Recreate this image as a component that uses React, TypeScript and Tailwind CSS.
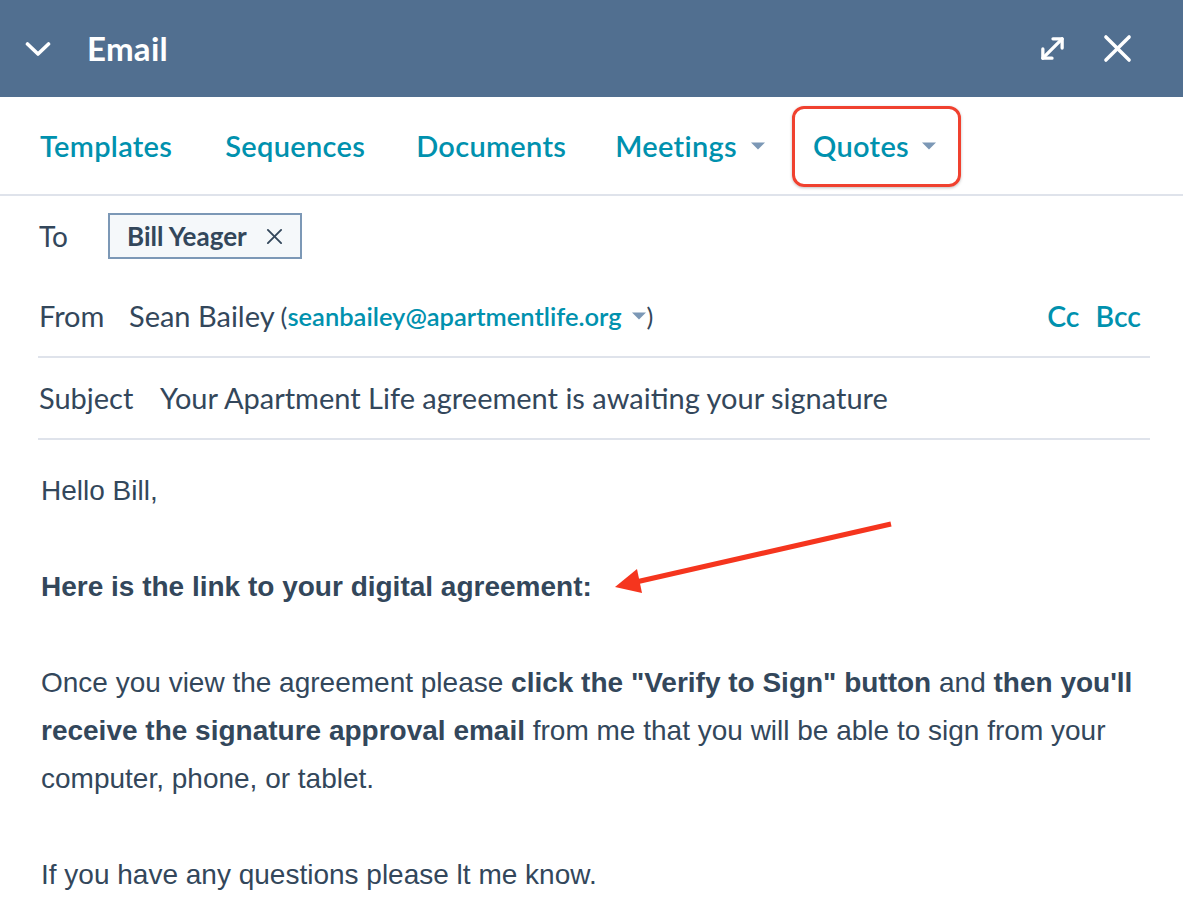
import React from "react";

const Caret = ({ className = "" }: { className?: string }) => (
  <svg viewBox="0 0 16 10" className={className} aria-hidden>
    <path d="M1 1.5 L15 1.5 L8 8.5 Z" fill="#7c98b6" />
  </svg>
);

export default function App() {
  const sans = { fontFamily: "Lato, 'Noto Sans', sans-serif" };
  return (
    <div className="relative w-[1183px] h-[923px] bg-white overflow-hidden" style={sans}>
      {/* Header */}
      <div className="h-[97px] bg-[#516f90] flex items-center px-[25px] text-white">
        <svg viewBox="0 0 26 16" className="w-[26px] h-[16px]" aria-hidden>
          <path d="M2.5 3 L13 13 L23.5 3" fill="none" stroke="white" strokeWidth="3.6" strokeLinecap="round" strokeLinejoin="round" />
        </svg>
        <span className="ml-[36px] text-[33px] font-bold tracking-[0.3px]">Email</span>
        <div className="ml-auto flex items-center gap-[37px] pr-[26px]">
          <svg viewBox="0 0 28 28" className="w-[27px] h-[27px]" aria-hidden>
            <g fill="none" stroke="white" strokeWidth="3.4" strokeLinecap="round" strokeLinejoin="round">
              <path d="M4 24 L24 4" />
              <path d="M14.5 4 L24 4 L24 13.5" />
              <path d="M4 14.5 L4 24 L13.5 24" />
            </g>
          </svg>
          <svg viewBox="0 0 30 30" className="w-[29px] h-[29px]" aria-hidden>
            <g fill="none" stroke="white" strokeWidth="3.6" strokeLinecap="round">
              <path d="M3 3 L27 27" />
              <path d="M27 3 L3 27" />
            </g>
          </svg>
        </div>
      </div>

      {/* Tabs */}
      <div className="h-[99px] border-b-2 border-[#dfe3eb] flex items-center pl-[40px] text-[29px] tracking-[0.3px] font-semibold text-[#0091ae]">
        <span>Templates</span>
        <span className="ml-[53px]">Sequences</span>
        <span className="ml-[51px]">Documents</span>
        <span className="ml-[49px] flex items-center">
          Meetings
          <Caret className="ml-[13px] w-[16px] h-[10px]" />
        </span>
        <span className="ml-[47px] flex items-center">
          Quotes
          <Caret className="ml-[12px] w-[16px] h-[10px]" />
        </span>
      </div>

      {/* Fields */}
      <div className="ml-[38px] w-[1112px] text-[#33475b]">
        <div className="h-[80px] flex items-center">
          <span className="w-[70px] pl-[1px] text-[28px]">To</span>
          <div className="h-[46px] flex items-center px-[17px] border-2 border-[#7c98b6] bg-[#f5f8fa] text-[26px] font-bold">
            <span>Bill Yeager</span>
            <svg viewBox="0 0 18 18" className="ml-[19px] w-[17px] h-[17px]" aria-hidden>
              <g fill="none" stroke="#33475b" strokeWidth="2" strokeLinecap="round">
                <path d="M2 2 L16 16" />
                <path d="M16 2 L2 16" />
              </g>
            </svg>
          </div>
        </div>
        <div className="h-[82px] flex items-center border-b-2 border-[#dfe3eb]">
          <span className="w-[91px] pl-[1px] text-[29px]">From</span>
          <span className="text-[29px]">Sean Bailey</span>
          <span className="ml-[6px] text-[25.5px] flex items-center">
            (<span className="text-[#0091ae] font-semibold">seanbailey@apartmentlife.org</span>
            <Caret className="ml-[9px] w-[16px] h-[10px]" />)
          </span>
          <span className="ml-auto mr-[9px] text-[28.5px] font-semibold text-[#0091ae]">
            Cc<span className="ml-[16px]">Bcc</span>
          </span>
        </div>
        <div className="h-[82px] flex items-center border-b-2 border-[#dfe3eb] text-[29px]">
          <span className="w-[122px] pl-[1px]">Subject</span>
          <span>Your Apartment Life agreement is awaiting your signature</span>
        </div>
      </div>

      {/* Body */}
      <div
        className="pl-[41px] pr-[40px] pt-[27px] text-[28px] leading-[48px] text-[#33475b]"
        style={{ fontFamily: "'Liberation Sans', Arial, sans-serif" }}
      >
        <p>Hello Bill,</p>
        <p>&nbsp;</p>
        <p className="font-bold">Here is the link to your digital agreement:</p>
        <p>&nbsp;</p>
        <p>
          Once you view the agreement please <b>click the "Verify to Sign" button</b> and{" "}
          <b>then you'll receive the signature approval email</b> from me that you will be able to sign from your
          computer, phone, or tablet.
        </p>
        <p>&nbsp;</p>
        <p>If you have any questions please lt me know.</p>
      </div>

      {/* Annotations */}
      <div className="absolute left-[792px] top-[106px] w-[169px] h-[81px] border-[3px] border-[#f0412f] rounded-[12px] shadow-[0_1px_3px_rgba(0,0,0,0.25)]" />
      <svg className="absolute left-0 top-0 pointer-events-none" width="1183" height="923" aria-hidden>
        <line x1="891" y1="524" x2="636" y2="582" stroke="#f5351e" strokeWidth="5" />
        <polygon points="615,587 637,569 642,593" fill="#f5351e" />
      </svg>
    </div>
  );
}
